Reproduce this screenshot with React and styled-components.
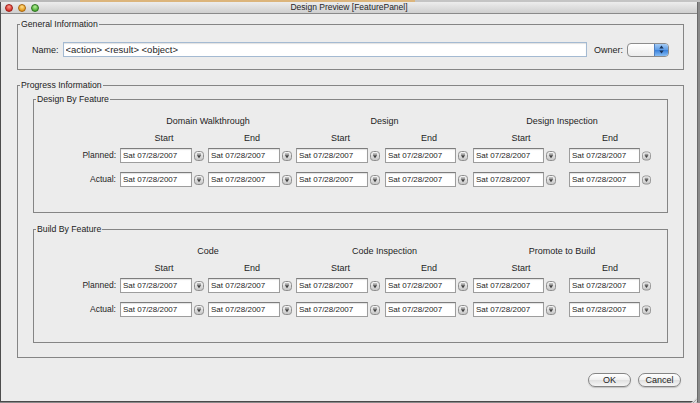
import React from "react";
import styled, { createGlobalStyle } from "styled-components";

const GlobalStyle = createGlobalStyle`
  html, body { margin: 0; padding: 0; }
  body {
    width: 700px;
    height: 403px;
    overflow: hidden;
    background: #8a8a8a;
    font-family: "Liberation Sans", Arial, sans-serif;
    color: #1e1e1e;
  }
`;

const TopStrip = styled.div`
  height: 2px;
  background: linear-gradient(to right, #b9b9b9 0 80px, #dcb57c 80px 415px, #c4c4c4 415px);
`;

const Window = styled.div`
  position: relative;
  width: 698px;
  height: 400px;
  box-sizing: border-box;
  border-left: 1px solid #4d4d4d;
  border-right: 1px solid #6a6a6a;
  border-bottom: 1px solid #4a4a4a;
  background: #ececec;
  display: flex;
  flex-direction: column;
`;

const TitleBar = styled.div`
  height: 12px;
  box-sizing: border-box;
  border-bottom: 1px solid #8a8a8a;
  background: linear-gradient(#ededed, #cfcfcf);
  display: grid;
  grid-template-columns: 1fr auto 1fr;
  align-items: center;
`;

const Lights = styled.div`
  display: flex;
  gap: 5px;
  padding-left: 4px;
`;

const lightColors = {
  red: ["#ff9c8f", "#d8342b", "#9b1d17"],
  yellow: ["#ffe08a", "#e59a1c", "#a8650e"],
  green: ["#b6f09a", "#4fae35", "#2d7320"],
};

const Light = styled.span`
  width: 8px;
  height: 8px;
  border-radius: 50%;
  box-sizing: border-box;
  border: 1px solid ${(p) => lightColors[p.$c][2]};
  background: radial-gradient(circle at 50% 30%, ${(p) => lightColors[p.$c][0]} 0, ${(p) => lightColors[p.$c][1]} 70%);
`;

const Title = styled.div`
  font-size: 8.5px;
  line-height: 11px;
  color: #262626;
`;

const Content = styled.div`
  padding: 5px 13px 0 16px;
  display: flex;
  flex-direction: column;
`;

const Group = styled.fieldset`
  margin: ${(p) => p.$mt || 0}px 0 0 0;
  padding: 0;
  min-width: 0;
  border: 1px solid #858585;
`;

const Legend = styled.legend`
  margin-left: 2px;
  padding: 0 1px;
  font-size: 8.7px;
  line-height: 11px;
  color: #222;
`;

const NameRow = styled.div`
  display: flex;
  align-items: center;
  padding: 12px 14px 12px 14px;
  font-size: 9px;
`;

const FieldLabel = styled.span`
  margin-left: ${(p) => p.$ml || 0}px;
  margin-right: 4px;
  white-space: nowrap;
`;

const NameInput = styled.input`
  flex: 1;
  min-width: 0;
  height: 15px;
  box-sizing: border-box;
  border: 1px solid #a4bad2;
  box-shadow: inset 0 1px 1px rgba(0, 0, 0, 0.12);
  background: #fff;
  padding: 0 2px;
  margin: 0;
  font-family: inherit;
  font-size: 9.5px;
  color: #1e1e1e;
  outline: none;
`;

const Combo = styled.div`
  width: 42px;
  height: 14px;
  box-sizing: border-box;
  border: 1px solid #8c8c8c;
  border-radius: 4px;
  background: linear-gradient(#ffffff, #ececec);
  display: flex;
  justify-content: flex-end;
  overflow: hidden;
`;

const ComboArrows = styled.div`
  width: 13px;
  border-left: 1px solid #4f7fc0;
  background: linear-gradient(#a4cbf5, #5c9be6 50%, #367fdb 51%, #86bcf3);
  display: flex;
  align-items: center;
  justify-content: center;
`;

const ProgressBody = styled.div`
  padding: 3px 15px 14px 15px;
  display: flex;
  flex-direction: column;
`;

const ScheduleGrid = styled.div`
  display: grid;
  grid-template-columns: 86px 88px 88px 89px 88px 96px 82px;
  grid-template-rows: 14px 17px 18px 24px;
  align-items: end;
  padding: 9px 0 25px 0;
  font-size: 9px;
  line-height: 14px;
`;

const PhaseHeader = styled.div`
  grid-column: ${(p) => p.$col} / span 2;
  text-align: center;
  white-space: nowrap;
`;

const SubHeader = styled.div`
  grid-column: ${(p) => p.$col};
  text-align: center;
`;

const RowLabel = styled.div`
  grid-column: 1;
  text-align: right;
  padding-right: 4px;
  line-height: 15px;
  font-size: 8.5px;
`;

const DateCell = styled.div`
  display: flex;
  align-items: center;
  gap: 2px;
`;

const DateInput = styled.input`
  width: ${(p) => p.$w || 72}px;
  height: 15px;
  box-sizing: border-box;
  margin: 0;
  border: 1px solid #9d9d9d;
  border-top-color: #7d7d7d;
  box-shadow: inset 0 1px 1px rgba(0, 0, 0, 0.12);
  background: #fff;
  padding: 0 2px;
  font-family: inherit;
  font-size: 8px;
  color: #1e1e1e;
  outline: none;
`;

const Footer = styled.div`
  display: flex;
  justify-content: flex-end;
  gap: 7px;
  padding: 15px 16px 0 0;
`;

const PillButton = styled.button`
  width: 43px;
  height: 14px;
  margin: 0;
  padding: 0;
  box-sizing: border-box;
  border: 1px solid #858585;
  border-radius: 7px;
  background: linear-gradient(#ffffff, #efefef 50%, #e0e0e0 51%, #f6f6f6);
  box-shadow: 0 1px 1px rgba(0, 0, 0, 0.18);
  font-family: inherit;
  font-size: 9px;
  line-height: 12px;
  color: #222;
`;

const Grip = styled.div`
  position: absolute;
  right: 0;
  bottom: 0;
  width: 9px;
  height: 9px;
`;

const Spinner = () => (
  <svg width="10" height="10" viewBox="0 0 10 10">
    <defs>
      <linearGradient id="spg" x1="0" y1="0" x2="0" y2="1">
        <stop offset="0" stopColor="#f8f8f8" />
        <stop offset="1" stopColor="#c4c4c4" />
      </linearGradient>
    </defs>
    <rect x="0.5" y="0.5" width="9" height="9" rx="3" fill="url(#spg)" stroke="#8f8f8f" />
    <path d="M3 3.1 H7" stroke="#6a6a6a" strokeWidth="0.9" />
    <path d="M2.8 4.3 L7.2 4.3 L5 7.2 Z" fill="#404040" />
  </svg>
);

const DATE = "Sat 07/28/2007";
const cols = [2, 3, 4, 5, 6, 7];
const widths = [72, 72, 72, 71, 71, 71];

function Schedule({ title, phases, mt }) {
  return (
    <Group $mt={mt}>
      <Legend>{title}</Legend>
      <ScheduleGrid>
        {phases.map((ph, i) => (
          <PhaseHeader key={ph} $col={2 + i * 2}>{ph}</PhaseHeader>
        ))}
        {cols.map((c) => (
          <SubHeader key={"s" + c} $col={c}>{c % 2 === 0 ? "Start" : "End"}</SubHeader>
        ))}
        {["Planned:", "Actual:"].map((lbl) => (
          <React.Fragment key={lbl}>
            <RowLabel>{lbl}</RowLabel>
            {cols.map((c, i) => (
              <DateCell key={lbl + c}>
                <DateInput readOnly value={DATE} $w={widths[i]} />
                <Spinner />
              </DateCell>
            ))}
          </React.Fragment>
        ))}
      </ScheduleGrid>
    </Group>
  );
}

export default function App() {
  return (
    <>
      <GlobalStyle />
      <TopStrip />
      <Window>
        <TitleBar>
          <Lights>
            <Light $c="red" />
            <Light $c="yellow" />
            <Light $c="green" />
          </Lights>
          <Title>Design Preview [FeaturePanel]</Title>
          <span />
        </TitleBar>
        <Content>
          <Group>
            <Legend>General Information</Legend>
            <NameRow>
              <FieldLabel>Name:</FieldLabel>
              <NameInput readOnly value="<action> <result> <object>" />
              <FieldLabel $ml={7}>Owner:</FieldLabel>
              <Combo>
                <ComboArrows>
                  <svg width="5" height="9" viewBox="0 0 5 9">
                    <path d="M0.3 3.6 L2.5 0.6 L4.7 3.6 Z" fill="#1b3357" />
                    <path d="M0.3 5.4 L2.5 8.4 L4.7 5.4 Z" fill="#1b3357" />
                  </svg>
                </ComboArrows>
              </Combo>
            </NameRow>
          </Group>
          <Group $mt={10}>
            <Legend>Progress Information</Legend>
            <ProgressBody>
              <Schedule
                title="Design By Feature"
                phases={["Domain Walkthrough", "Design", "Design Inspection"]}
              />
              <Schedule
                title="Build By Feature"
                mt={11}
                phases={["Code", "Code Inspection", "Promote to Build"]}
              />
            </ProgressBody>
          </Group>
        </Content>
        <Footer>
          <PillButton>OK</PillButton>
          <PillButton>Cancel</PillButton>
        </Footer>
        <Grip>
          <svg width="9" height="9" viewBox="0 0 9 9">
            <path d="M9 0 L9 9 L0 9 Z" fill="#dcdcdc" />
            <path d="M8.5 2.5 L2.5 8.5 M8.5 5.5 L5.5 8.5" stroke="#9a9a9a" strokeWidth="0.8" />
          </svg>
        </Grip>
      </Window>
    </>
  );
}
